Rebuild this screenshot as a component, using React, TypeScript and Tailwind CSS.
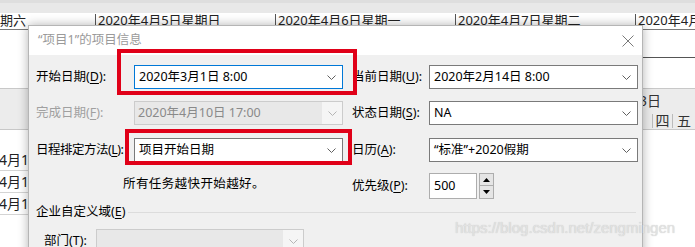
const ui = "font-['Noto_Sans','Noto_Sans_CJK_SC',sans-serif]";

function Chevron({ color = "#606060" }: { color?: string }) {
  return (
    <svg width="9" height="5" viewBox="0 0 9 5" className="shrink-0">
      <polyline points="0.5,0.5 4.5,4.5 8.5,0.5" fill="none" stroke={color} strokeWidth="1" />
    </svg>
  );
}

function Combo({ value, focused, disabled, width = "w-[209px]" }: { value: string; focused?: boolean; disabled?: boolean; width?: string }) {
  if (disabled) {
    return (
      <div className={`${width} h-[24px] shrink-0 flex border border-[#cccccc] bg-[#f5f5f5]`}>
        <div className="flex-1 bg-[#e8e8e8] flex items-center pl-[3px] text-[#8a8a8a]">{value}</div>
        <div className="w-[20px] flex items-center justify-center">
          <Chevron color="#b5b5b5" />
        </div>
      </div>
    );
  }
  return (
    <div
      className={`${width} h-[24px] shrink-0 flex items-center justify-between bg-white border ${
        focused ? "border-[#0078d7]" : "border-[#7a7a7a]"
      } pl-[4px] pr-[6px]`}
    >
      <span>{value}</span>
      <Chevron />
    </div>
  );
}

function Label({ text, k, w = "w-[98px]", muted, tight }: { text: string; k: string; w?: string; muted?: boolean; tight?: boolean }) {
  return (
    <div className={`${w} shrink-0 whitespace-nowrap ${tight ? "tracking-[-0.5px]" : ""} ${muted ? "text-[#a0a0a0]" : "text-black"}`}>
      {text}(<span className="underline underline-offset-2">{k}</span>):
    </div>
  );
}

export default function App() {
  return (
    <div className={`relative w-[695px] h-[247px] overflow-hidden bg-white ${ui} text-[12.5px] leading-none`}>
      {/* project view behind the dialog */}
      <div className="h-[13px] bg-[#e8e8e8] border-t-[3px] border-t-[#dedede]" />
      <div className="h-[17px] flex border-b border-[#7a7a7a] text-[13px] text-[#222] items-start pt-[1px]">
        <div className="w-[95px] shrink-0">期六</div>
        {["2020年4月5日星期日", "2020年4月6日星期一", "2020年4月7日星期二", "2020年4月8日"].map((d) => (
          <div key={d} className="w-[180px] shrink-0 border-l border-[#555] pl-[2px] h-[13px] leading-[13px] whitespace-nowrap">
            {d}
          </div>
        ))}
      </div>
      <div className="flex">
        <div className="w-[28px] shrink-0 flex flex-col text-[14px] text-[#222]">
          <div className="h-[58px]" />
          <div className="h-[42px] bg-[#ececec] border-y border-[#c8c8c8]" />
          <div className="h-[19px]" />
          {[0, 1, 2].map((i) => (
            <div key={i} className="h-[22px] border-b border-[#d4d4d4] flex items-center -ml-[1px] whitespace-nowrap">
              4月1
            </div>
          ))}
        </div>
        <div className="ml-auto w-[52px] shrink-0 flex flex-col text-[14px] text-[#333]">
          <div className="h-[28px] border-b border-[#555]" />
          <div className="h-[30px]" />
          <div className="h-[42px] bg-[#ececec] border-y border-[#c8c8c8] flex flex-col">
            <div className="h-[24px] flex items-center -ml-[4px] whitespace-nowrap">3日</div>
            <div className="flex-1 flex items-center">
              <span className="w-[10px] h-[14px] border-r border-[#bbb]" />
              <span className="w-[20px] h-[14px] text-center border-r border-[#bbb]">四</span>
              <span className="pl-[4px]">五</span>
            </div>
          </div>
        </div>
      </div>

      {/* dialog */}
      <div className="absolute left-[28px] top-[25px] w-[615px] h-[240px] flex flex-col bg-[#f0f0f0] border-l border-r border-t border-[#b5b5b5] shadow-[0_0_10px_rgba(0,0,0,0.3)]">
        <div className="h-[29px] shrink-0 bg-white flex items-center justify-between pl-[9px] pr-[8px] text-[#9a9a9a] text-[12.5px]">
          <span>“项目1”的项目信息</span>
          <svg width="12" height="12" viewBox="0 0 12 12">
            <path d="M0.5 0.5 L11.5 11.5 M11.5 0.5 L0.5 11.5" stroke="#7a7a7a" strokeWidth="1" />
          </svg>
        </div>
        <div className="pt-[10px] pl-[7px] pr-[6px] flex flex-col">
          <div className="flex items-center h-[24px]">
            <Label text="开始日期" k="D" />
            <Combo value="2020年3月1日  8:00" focused />
            <div className="w-[9px] shrink-0" />
            <Label text="当前日期" k="U" w="w-[77px]" />
            <Combo value="2020年2月14日  8:00" />
          </div>
          <div className="flex items-center h-[24px] mt-[12px]">
            <Label text="完成日期" k="F" muted />
            <Combo value="2020年4月10日  17:00" disabled />
            <div className="w-[9px] shrink-0" />
            <Label text="状态日期" k="S" w="w-[77px]" />
            <Combo value="NA" />
          </div>
          <div className="flex items-center h-[24px] mt-[13px]">
            <Label text="日程排定方法" k="L" tight />
            <Combo value="项目开始日期" />
            <div className="w-[9px] shrink-0" />
            <Label text="日历" k="A" w="w-[77px]" />
            <Combo value="“标准”+2020假期" />
          </div>
          <div className="flex items-center h-[26px] mt-[11px]">
            <div className="w-[316px] shrink-0 pl-[87px] -mt-[4px] tracking-[0.4px]">所有任务越快开始越好。</div>
            <Label text="优先级" k="P" w="w-[77px]" />
            <div className="w-[48px] h-[26px] bg-white border border-[#adadad] flex items-center pl-[4px]">500</div>
            <div className="ml-[2px] w-[15px] h-[26px] flex flex-col">
              <div className="h-[13px] bg-[#e5e5e5] border border-[#adadad] flex items-center justify-center">
                <svg width="7" height="4" viewBox="0 0 7 4"><polygon points="3.5,0 7,4 0,4" fill="#000" /></svg>
              </div>
              <div className="h-[13px] bg-[#e5e5e5] border border-t-0 border-[#adadad] flex items-center justify-center">
                <svg width="7" height="4" viewBox="0 0 7 4"><polygon points="0,0 7,0 3.5,4" fill="#000" /></svg>
              </div>
            </div>
          </div>
          <div className="flex items-center h-[18px] mt-[4px]">
            <span>
              企业自定义域(<span className="underline underline-offset-2">E</span>)
            </span>
            <div className="flex-1 h-px bg-[#dcdcdc] ml-[3px]" />
          </div>
          <div className="flex items-center h-[24px] mt-[8px]">
            <Label text="部门" k="T" w="w-[60px] pl-[8px]" />
            <Combo value="" disabled width="w-[208px]" />
          </div>
        </div>
      </div>

      {/* watermark */}
      <div className="absolute left-[455px] top-[220px] text-[15px] font-['Liberation_Sans',sans-serif] text-[#e2e2e2] [text-shadow:0_0_1px_rgba(120,120,120,0.4)] whitespace-nowrap">
        https://blog.csdn.net/zengmingen
      </div>

      {/* red annotation boxes */}
      <div className="absolute left-[117px] top-[49px] w-[240px] h-[46px] border-[4px] border-[#e00018]" />
      <div className="absolute left-[125px] top-[129px] w-[227px] h-[36px] border-[4px] border-[#e00018]" />
    </div>
  );
}
